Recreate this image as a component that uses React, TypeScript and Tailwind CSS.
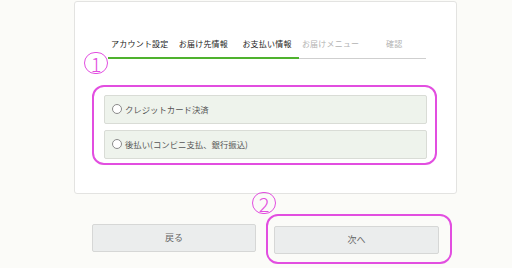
const steps = [
  { label: 'アカウント設定', done: true },
  { label: 'お届け先情報', done: true },
  { label: 'お支払い情報', done: true },
  { label: 'お届けメニュー', done: false },
  { label: '確認', done: false },
];

const options = ['クレジットカード決済', '後払い(コンビニ支払、銀行振込)'];

function Marker({ n }: { n: string }) {
  return (
    <span className="flex h-[22px] w-[24px] items-center justify-center rounded-full border-[1.5px] border-[#e24ee0] pt-px text-[20px] font-light leading-none text-[#e24ee0]">
      {n}
    </span>
  );
}

export default function App() {
  return (
    <main
      className="relative h-[268px] w-[512px] overflow-hidden bg-[#fbfbf8]"
      style={{ fontFamily: '"Noto Sans CJK JP", "Noto Sans", sans-serif' }}
    >
      <section className="ml-[74px] mt-px h-[193px] w-[383px] rounded-[3px] border border-[#e3e3e1] bg-white">
        <div className="ml-[33px] w-[318px] pt-[37px]">
          <div className="grid grid-cols-5">
            {steps.map((s) => (
              <div key={s.label} className="flex flex-col items-center">
                <span
                  className={`text-[8px] leading-[10px] tracking-[0.2px] ${s.done ? 'text-[#222]' : 'text-[#b3b3b3]'}`}
                >
                  {s.label}
                </span>
                <div className={`w-full ${s.done ? 'mt-[8px] h-[1.5px] bg-[#4fb22e]' : 'mt-[8.5px] h-px bg-[#cfcfcf]'}`} />
              </div>
            ))}
          </div>
        </div>

        <div className="ml-[17px] mt-[26px] w-[345px] rounded-[12px] border-2 border-[#e24ee0] pb-[4px] pl-[10px] pr-[8px] pt-[8px]">
          <div className="flex flex-col gap-[6px]">
            {options.map((o) => (
              <label
                key={o}
                className="flex h-[29px] items-center gap-[3px] rounded-[2px] border border-[#d9dcd6] bg-[#eef3ec] pl-[7px] text-[8.4px] text-[#555]"
              >
                <span className="h-[10px] w-[10px] rounded-full border border-[#8a8a8a] bg-white" />
                {o}
              </label>
            ))}
          </div>
        </div>
      </section>

      <div className="ml-[92px] mt-[20px] flex items-start gap-[10px]">
        <button className="mt-[10px] h-[28px] w-[164px] rounded-[2px] border border-[#d6d7d6] bg-[#ebeded] text-[9px] text-[#666]">
          戻る
        </button>
        <div className="rounded-[12px] border-2 border-[#e24ee0] pb-[8px] pl-[6px] pr-[11px] pt-[8px]">
          <button className="h-[28px] w-[165px] rounded-[2px] border border-[#d6d7d6] bg-[#ebeded] text-[9px] text-[#666]">
            次へ
          </button>
        </div>
      </div>

      <div className="absolute left-[84px] top-[52px]">
        <Marker n="1" />
      </div>
      <div className="absolute left-[252px] top-[192px]">
        <Marker n="2" />
      </div>
    </main>
  );
}
